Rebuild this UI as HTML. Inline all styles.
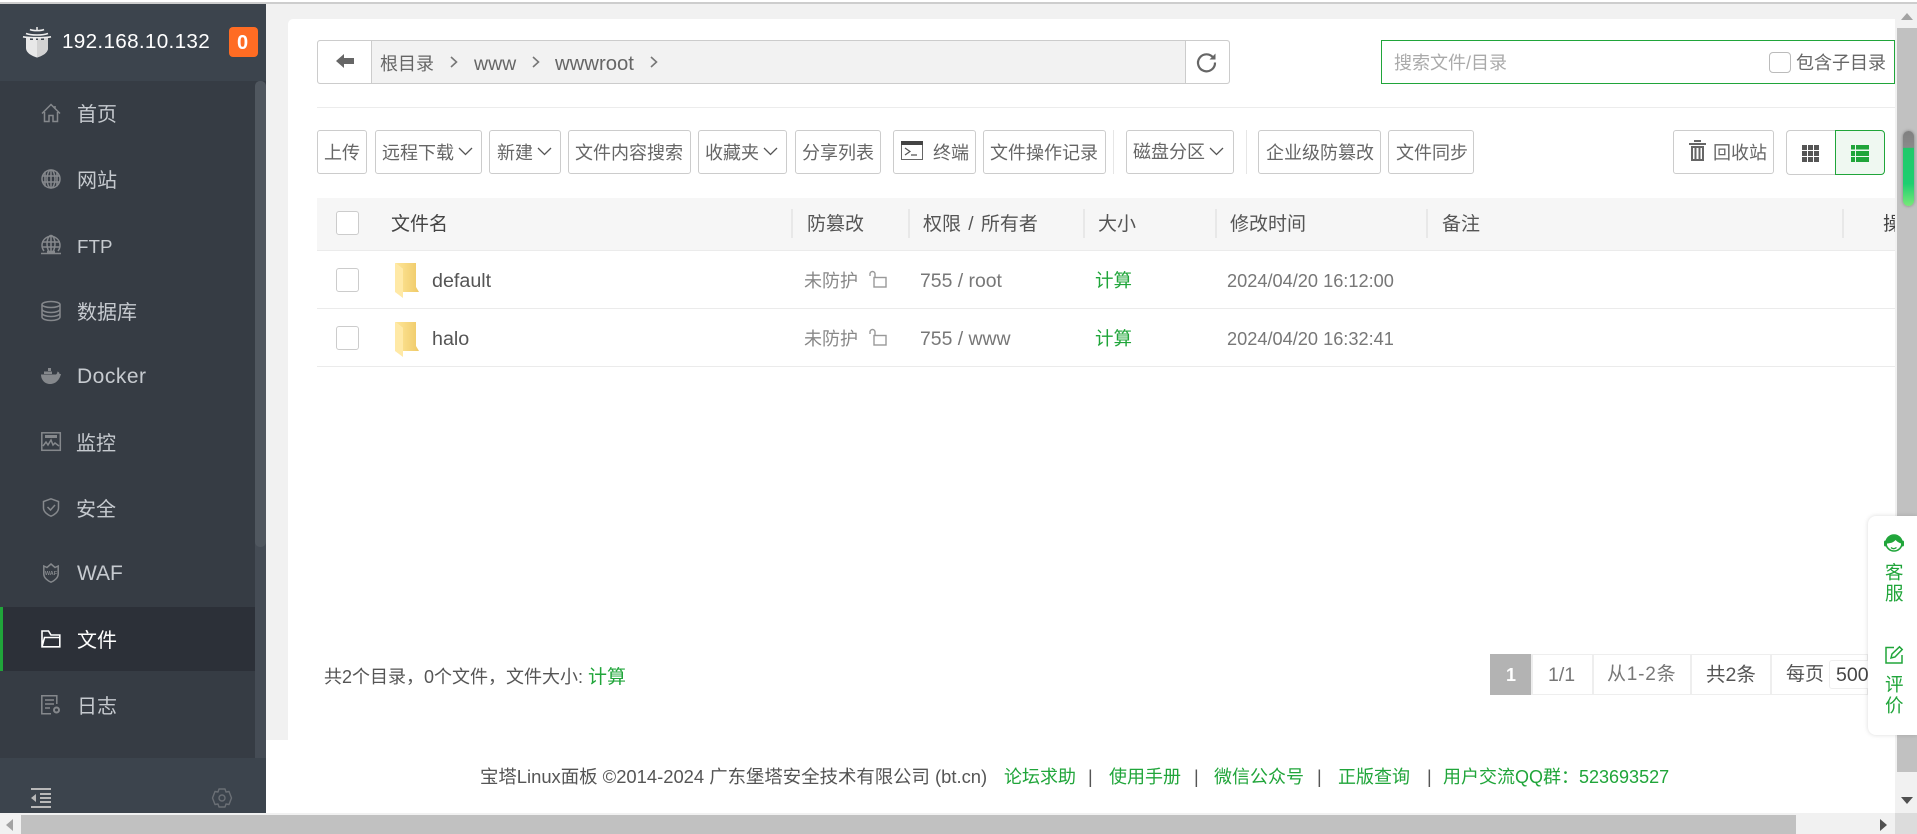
<!DOCTYPE html>
<html lang="zh-CN"><head><meta charset="utf-8"><title>文件管理</title>
<style>
html,body{margin:0;padding:0;width:1917px;height:834px;overflow:hidden;background:#fff}
body{position:relative;font-family:"Liberation Sans","Noto Sans CJK SC",sans-serif;color:#666}
.a{position:absolute;box-sizing:border-box}
.t{position:absolute;white-space:nowrap;line-height:0;font-size:18px}
.m{font-size:20px;color:#c6cacf;left:77px}
.b{position:absolute;box-sizing:border-box;top:130px;height:44px;border:1px solid #ccc;border-radius:3px;background:#fff}
.h{color:#555;font-size:19px}
.g{color:#20a53a}
.s{position:absolute;width:2px;background:#e8e8e8;top:209px;height:29px}
.l{position:absolute;left:317px;width:1578px;height:1px;background:#ebebeb}
.c{position:absolute;box-sizing:border-box;left:336px;width:23px;height:24px;border:1px solid #ccc;border-radius:3px;background:#fff}
svg{position:absolute;overflow:visible}
.i{fill:none;stroke:#85888c;stroke-width:1.5}
.v{color:#666}
</style></head><body>
<!-- top line -->
<div class="a" style="left:0;top:2px;width:1917px;height:2px;background:#cdcdcd"></div>
<!-- content bg -->
<div class="a" style="left:266px;top:4px;width:1629px;height:736px;background:#f1f1f1"></div>
<div class="a" style="left:288px;top:19px;width:1607px;height:721px;background:#fff;border-top-left-radius:5px"></div>

<!-- sidebar -->
<div class="a" style="left:0;top:4px;width:266px;height:809px;background:#363c44"></div>
<div class="a" style="left:0;top:4px;width:266px;height:77px;background:#3c444d"></div>
<div class="a" style="left:255px;top:81px;width:11px;height:677px;background:#454c55;border-radius:5px 5px 0 0"></div>
<div class="a" style="left:255px;top:81px;width:11px;height:466px;background:#50575f;border-radius:5px"></div>
<div class="a" style="left:0;top:607px;width:255px;height:64px;background:#2c3038"></div>
<div class="a" style="left:0;top:607px;width:3px;height:64px;background:#20a53a"></div>
<div class="a" style="left:0;top:758px;width:266px;height:55px;background:#3c444d"></div>

<svg style="left:23px;top:27px" width="28" height="31" viewBox="0 0 28 31"><path d="M3 11H7V13H10V11H13V13H15V11H18V13H21V11H25V21C25 26 19 29 14 30.500C9 29 3 26 3 21Z" fill="#e8e8e8"/><path d="M14 13H15V11H18V13H21V11H25V21C25 26 19 29 14 30.500Z" fill="#d2d2d2"/><path d="M7 2.500C10 4 18 4 21 2.500M3 6.500C8 8.500 20 8.500 25 6.500M0 9.800C6 11 22 11 28 9.800" stroke="#eee" stroke-width="1.600" fill="none"/><path d="M14 0V3" stroke="#eee" stroke-width="1.500"/></svg>
<div class="t" style="left:62px;top:42px;font-size:20.700px;color:#fff;letter-spacing:.3px">192.168.10.132</div>
<div class="a" style="left:229px;top:27px;width:29px;height:30px;background:#ff6c23;border-radius:4px"></div>
<div class="t" style="left:237px;top:43px;font-size:20px;color:#fff;font-weight:bold">0</div>

<svg class="i" style="left:41px;top:103px" width="20" height="20" viewBox="0 0 20 20"><path d="M1 10.500L10 1.500L19 10.500M3.500 9V18.500H8V12.500H12V18.500H16.500V9M14 3V6"/></svg>
<div class="t m" style="top:115px">首页</div>
<svg class="i" style="left:41px;top:169px" width="20" height="20" viewBox="0 0 20 20"><circle cx="10" cy="10" r="9"/><ellipse cx="10" cy="10" rx="4" ry="9"/><path d="M1 7H19M1 13H19M10 1V19M4 2.500V17.500M16 2.500V17.500"/></svg>
<div class="t m" style="top:181px">网站</div>
<svg class="i" style="left:41px;top:235px" width="20" height="20" viewBox="0 0 20 20"><path d="M3 16A9 9 0 1 1 17 16"/><ellipse cx="10" cy="9" rx="4" ry="8.500"/><path d="M1 7H19M1 12H19M10 1V17M0 18.500H20"/><path d="M6 17H14" stroke-width="2.500"/></svg>
<div class="t m" style="top:247px;font-size:18.800px;left:77px">FTP</div>
<svg class="i" style="left:41px;top:301px" width="20" height="20" viewBox="0 0 20 20"><ellipse cx="10" cy="3.500" rx="9" ry="3"/><path d="M1 3.500V16C1 18 5 19.500 10 19.500S19 18 19 16V3.500M1 8C1 10 5 11.500 10 11.500S19 10 19 8M1 12C1 14 5 15.500 10 15.500S19 14 19 12"/></svg>
<div class="t m" style="top:313px">数据库</div>
<svg style="left:41px;top:367px" width="20" height="18" viewBox="0 0 20 18"><path d="M0 7.500H15C16 7 16.500 5 16.500 4.500C18 5 18.500 6 18.500 7C19 7 19.500 7 20 7C19 11 16 17 9 17C3 17 0 12 0 7.500Z" fill="#85888c"/><path d="M3 4.500H11V7H3ZM7 1H10V4H7Z" fill="#85888c"/></svg>
<div class="t m" style="top:377px;font-size:21px;letter-spacing:.5px">Docker</div>
<svg class="i" style="left:41px;top:432px" width="20" height="19" viewBox="0 0 20 19"><rect x=".8" y=".8" width="18.500" height="17.500"/><rect x="4" y="3" width="12" height="3" fill="#85888c" stroke="none"/><path d="M2 14L5 10L7 13L10 8L12 13L14 11L18 14"/></svg>
<div class="t m" style="top:444px;left:76px">监控</div>
<svg class="i" style="left:43px;top:498px" width="16" height="19" viewBox="0 0 16 19"><path d="M8 .8L15.500 3.500V10C15.500 14 11 17 8 18.200C5 17 .5 14 .5 10V3.500Z"/><path d="M4.500 9L7.500 12L12 7"/></svg>
<div class="t m" style="top:510px;left:76px">安全</div>
<svg class="i" style="left:43px;top:563px" width="16" height="20" viewBox="0 0 16 20"><path d="M.8 3L4 4.500L8 1L12 4.500L15.200 3V11C15.200 15 11 18 8 19.200C5 18 .8 15 .8 11Z"/><text x="8" y="12" text-anchor="middle" font-size="5.500" font-weight="bold" fill="#85888c" stroke="none" font-family="Liberation Sans">WAF</text></svg>
<div class="t m" style="top:574px;font-size:21px">WAF</div>
<svg style="left:41px;top:630px" width="20" height="18" viewBox="0 0 20 18" fill="none" stroke="#fff" stroke-width="1.600"><path d="M1 16.800V1H7.500L10 5H18.800V16.800ZM1 16.800L3.500 7.500H19"/></svg>
<div class="t m" style="top:641px;color:#fff">文件</div>
<svg class="i" style="left:41px;top:695px" width="20" height="20" viewBox="0 0 20 20"><path d="M15.800 9V.8H.8V18.800H10M4 5H13M4 9H13M4 13H9"/><circle cx="15.500" cy="15" r="2.500" stroke-width="2"/></svg>
<div class="t m" style="top:707px">日志</div>

<svg style="left:31px;top:788px" width="20" height="20" viewBox="0 0 20 20" fill="#b8b8b8"><rect width="20" height="2"/><rect y="18" width="20" height="2"/><rect x="9" y="5" width="11" height="2"/><rect x="9" y="9" width="11" height="2"/><rect x="9" y="13" width="11" height="2"/><path d="M5 6V14L0 10Z"/></svg>
<svg style="left:212px;top:788px" width="20" height="20" viewBox="0 0 20 20" fill="none" stroke="#6a6f75" stroke-width="1.400"><path d="M7 1H13L14 4L17 3.500L19.500 10L17 16.500L14 16L13 19H7L6 16L3 16.500L.5 10L3 3.500L6 4Z" stroke-linejoin="round"/><circle cx="10" cy="10" r="3"/></svg>

<!-- breadcrumb -->
<div class="a" style="left:317px;top:40px;width:913px;height:44px;background:#f2f2f2;border:1px solid #ccc;border-radius:3px"></div>
<div class="a" style="left:318px;top:41px;width:54px;height:42px;background:#fff;border-right:1px solid #ccc;border-radius:3px 0 0 3px"></div>
<div class="a" style="left:1185px;top:41px;width:44px;height:42px;background:#fff;border-left:1px solid #ccc;border-radius:0 3px 3px 0"></div>
<svg style="left:336px;top:54px" width="19" height="14" viewBox="0 0 19 14"><path d="M0 7L8 0V4H18V10H8V14Z" fill="#666"/></svg>
<div class="t" style="left:380px;top:64px;color:#666">根目录</div>
<svg class="ch" style="left:450px;top:56px" width="8" height="12" viewBox="0 0 8 12"><path d="M1 1L6.500 6L1 11" fill="none" stroke="#777" stroke-width="1.600"/></svg>
<div class="t" style="left:474px;top:64px;color:#666;font-size:19.500px">www</div>
<svg style="left:532px;top:56px" width="8" height="12" viewBox="0 0 8 12"><path d="M1 1L6.500 6L1 11" fill="none" stroke="#777" stroke-width="1.600"/></svg>
<div class="t" style="left:555px;top:64px;color:#666;font-size:20.300px">wwwroot</div>
<svg style="left:650px;top:56px" width="8" height="12" viewBox="0 0 8 12"><path d="M1 1L6.500 6L1 11" fill="none" stroke="#777" stroke-width="1.600"/></svg>
<svg style="left:1196px;top:52px" width="21" height="21" viewBox="0 0 21 21" fill="none" stroke="#666" stroke-width="2.200"><path d="M17.500 6A8.500 8.500 0 1 0 19 10.500"/><path d="M19.500 1.500V7.500H13.500" fill="#666" stroke="none"/></svg>

<!-- search -->
<div class="a" style="left:1381px;top:40px;width:514px;height:44px;border:1px solid #20a53a;border-right:1px solid #20a53a;background:#fff"></div>
<div class="t" style="left:1394px;top:63px;color:#aaa">搜索文件/目录</div>
<div class="a" style="left:1769px;top:52px;width:22px;height:21px;border:1px solid #bbb;border-radius:4px;background:#fff"></div>
<div class="t" style="left:1796px;top:63px;color:#666">包含子目录</div>

<div class="a" style="left:317px;top:107px;width:1578px;height:1px;background:#ececec"></div>

<!-- toolbar -->
<div class="b" style="left:317px;width:50px"></div><div class="t v" style="left:324px;top:153px">上传</div>
<div class="b" style="left:375px;width:107px"></div><div class="t v" style="left:382px;top:153px">远程下载</div>
<svg style="left:458px;top:147px" width="15" height="9" viewBox="0 0 15 9"><path d="M1 1L7.500 7.500L14 1" fill="none" stroke="#555" stroke-width="1.300"/></svg>
<div class="b" style="left:489px;width:72px"></div><div class="t v" style="left:497px;top:153px">新建</div>
<svg style="left:537px;top:147px" width="15" height="9" viewBox="0 0 15 9"><path d="M1 1L7.500 7.500L14 1" fill="none" stroke="#555" stroke-width="1.300"/></svg>
<div class="b" style="left:568px;width:123px"></div><div class="t v" style="left:575px;top:153px">文件内容搜索</div>
<div class="b" style="left:698px;width:89px"></div><div class="t v" style="left:705px;top:153px">收藏夹</div>
<svg style="left:763px;top:147px" width="15" height="9" viewBox="0 0 15 9"><path d="M1 1L7.500 7.500L14 1" fill="none" stroke="#555" stroke-width="1.300"/></svg>
<div class="b" style="left:795px;width:86px"></div><div class="t v" style="left:802px;top:153px">分享列表</div>
<div class="b" style="left:893px;width:83px"></div>
<svg style="left:901px;top:141px" width="22" height="19" viewBox="0 0 22 19"><rect x=".5" y=".5" width="21" height="18" fill="#fff" stroke="#666"/><rect width="22" height="4" fill="#444"/><path d="M4 7L9 10.500L4 14M10 14H16" fill="none" stroke="#555" stroke-width="1.200"/></svg>
<div class="t v" style="left:933px;top:153px">终端</div>
<div class="b" style="left:983px;width:123px"></div><div class="t v" style="left:990px;top:153px">文件操作记录</div>
<div class="a" style="left:1113px;top:130px;width:1px;height:44px;background:#e6e6e6"></div>
<div class="b" style="left:1126px;width:108px"></div><div class="t v" style="left:1133px;top:152px">磁盘分区</div>
<svg style="left:1209px;top:147px" width="15" height="9" viewBox="0 0 15 9"><path d="M1 1L7.500 7.500L14 1" fill="none" stroke="#555" stroke-width="1.300"/></svg>
<div class="a" style="left:1246px;top:130px;width:1px;height:44px;background:#e6e6e6"></div>
<div class="b" style="left:1258px;width:123px"></div><div class="t v" style="left:1266px;top:153px">企业级防篡改</div>
<div class="b" style="left:1388px;width:86px"></div><div class="t v" style="left:1396px;top:153px">文件同步</div>
<div class="b" style="left:1673px;width:101px"></div>
<svg style="left:1689px;top:140px" width="17" height="21" viewBox="0 0 17 21" fill="#666"><rect y="3" width="17" height="2"/><rect x="5" width="7" height="2"/><path d="M2 6H15V21H2ZM4 8V19H5.500V8ZM7.500 8V19H9.500V8ZM11.500 8V19H13V8Z" fill-rule="evenodd"/></svg>
<div class="t v" style="left:1713px;top:153px">回收站</div>
<div class="a" style="left:1786px;top:130px;width:50px;height:45px;border:1px solid #ccc;border-right:0;border-radius:4px 0 0 4px;background:#fff"></div>
<div class="a" style="left:1835px;top:130px;width:50px;height:45px;border:1px solid #20a53a;border-radius:0 4px 4px 0;background:#eff8f1"></div>
<svg style="left:1802px;top:145px" width="17" height="17" viewBox="0 0 17 17" fill="#555"><rect width="5" height="5"/><rect x="6" width="5" height="5"/><rect x="12" width="5" height="5"/><rect y="6" width="5" height="5"/><rect x="6" y="6" width="5" height="5"/><rect x="12" y="6" width="5" height="5"/><rect y="12" width="5" height="5"/><rect x="6" y="12" width="5" height="5"/><rect x="12" y="12" width="5" height="5"/></svg>
<svg style="left:1851px;top:145px" width="18" height="17" viewBox="0 0 18 17" fill="#20a53a"><rect width="4" height="4.500"/><rect x="5" width="13" height="4.500"/><rect y="6" width="4" height="5"/><rect x="5" y="6" width="13" height="5"/><rect y="12" width="4" height="5"/><rect x="5" y="12" width="13" height="5"/></svg>

<!-- table -->
<div class="a" style="left:317px;top:198px;width:1578px;height:52px;background:#f6f6f6;overflow:hidden"><div class="t" style="left:1566px;top:27px;color:#444;font-size:19px">操作</div></div>
<div class="l" style="top:250px"></div><div class="l" style="top:308px"></div><div class="l" style="top:366px"></div>
<div class="c" style="top:211px"></div><div class="c" style="top:268px"></div><div class="c" style="top:326px"></div>
<div class="t" style="left:391px;top:225px;color:#444;font-size:19px">文件名</div>
<div class="s" style="left:791px"></div><div class="t h" style="left:807px;top:225px">防篡改</div>
<div class="s" style="left:908px"></div><div class="t h" style="left:923px;top:225px;word-spacing:2px">权限 / 所有者</div>
<div class="s" style="left:1083px"></div><div class="t h" style="left:1098px;top:225px">大小</div>
<div class="s" style="left:1215px"></div><div class="t h" style="left:1230px;top:225px">修改时间</div>
<div class="s" style="left:1426px"></div><div class="t h" style="left:1442px;top:225px">备注</div>
<div class="s" style="left:1842px"></div>

<svg style="left:395px;top:263px" width="24" height="35" viewBox="0 0 24 35"><defs><linearGradient id="f1" x1="0" x2="1" y1="0" y2="0"><stop offset="0" stop-color="#ffe79a"/><stop offset="1" stop-color="#efca68"/></linearGradient></defs><path d="M0 0H21V24L24 29H8V6Z" fill="url(#f1)"/><path d="M0 0L8 6V35L0 29Z" fill="#ffe9a6"/></svg>
<div class="t" style="left:432px;top:281px;color:#555;font-size:19.700px">default</div>
<div class="t" style="left:804px;top:281px;color:#888">未防护</div>
<svg style="left:869px;top:271px" width="18" height="17" viewBox="0 0 18 17" fill="none" stroke="#999" stroke-width="1.400"><rect x="5" y="6.500" width="12" height="9.500"/><path d="M6 6.500V3A2.500 2.500 0 0 0 1 3V5"/></svg>
<div class="t" style="left:920px;top:281px;color:#777;font-size:19.400px">755 / root</div>
<div class="t g" style="left:1095px;top:281px;font-size:18.500px">计算</div>
<div class="t" style="left:1227px;top:281px;color:#777;font-size:18.200px">2024/04/20 16:12:00</div>

<svg style="left:395px;top:322px" width="24" height="35" viewBox="0 0 24 35"><path d="M0 0H21V24L24 29H8V6Z" fill="url(#f1)"/><path d="M0 0L8 6V35L0 29Z" fill="#ffe9a6"/></svg>
<div class="t" style="left:432px;top:339px;color:#555;font-size:19.700px">halo</div>
<div class="t" style="left:804px;top:339px;color:#888">未防护</div>
<svg style="left:869px;top:329px" width="18" height="17" viewBox="0 0 18 17" fill="none" stroke="#999" stroke-width="1.400"><rect x="5" y="6.500" width="12" height="9.500"/><path d="M6 6.500V3A2.500 2.500 0 0 0 1 3V5"/></svg>
<div class="t" style="left:920px;top:339px;color:#777;font-size:19.400px">755 / www</div>
<div class="t g" style="left:1095px;top:339px;font-size:18.500px">计算</div>
<div class="t" style="left:1227px;top:339px;color:#777;font-size:18.200px">2024/04/20 16:32:41</div>

<!-- stats and pagination -->
<div class="t" style="left:324px;top:677px;color:#555;font-size:18px">共2个目录，0个文件，文件大小: <span class="g" style="font-size:19px">计算</span></div>
<div class="a" style="left:1490px;top:654px;width:41px;height:41px;background:#b3b3b3"></div>
<div class="t" style="left:1506px;top:675px;color:#fff;font-weight:bold">1</div>
<div class="a" style="left:1531px;top:654px;width:337px;height:41px;border:1px solid #eee;border-left:2px solid #eee"></div>
<div class="a" style="left:1592px;top:654px;width:2px;height:41px;background:#eee"></div>
<div class="a" style="left:1690px;top:654px;width:2px;height:41px;background:#eee"></div>
<div class="a" style="left:1770px;top:654px;width:2px;height:41px;background:#eee"></div>
<div class="t" style="left:1548px;top:675px;color:#777;font-size:19.500px">1/1</div>
<div class="t" style="left:1607px;top:675px;color:#777;font-size:19px;letter-spacing:.8px">从1-2条</div>
<div class="t" style="left:1706px;top:675px;color:#555;font-size:19.500px">共2条</div>
<div class="t" style="left:1786px;top:675px;color:#555;font-size:19px">每页</div>
<div class="a" style="left:1829px;top:660px;width:60px;height:29px;border:1px solid #eee;border-radius:3px;background:#fff"></div>
<div class="t" style="left:1836px;top:675px;color:#444;font-size:19.500px">500</div>

<!-- footer -->
<div class="t" style="left:480px;top:777px;color:#555;font-size:18.400px">宝塔Linux面板 ©2014-2024 广东堡塔安全技术有限公司 (bt.cn)</div>
<div class="t g" style="left:1004px;top:777px">论坛求助</div><div class="t" style="left:1088px;top:777px;color:#555">|</div>
<div class="t g" style="left:1109px;top:777px">使用手册</div><div class="t" style="left:1194px;top:777px;color:#555">|</div>
<div class="t g" style="left:1214px;top:777px">微信公众号</div><div class="t" style="left:1317px;top:777px;color:#555">|</div>
<div class="t g" style="left:1338px;top:777px">正版查询</div><div class="t" style="left:1427px;top:777px;color:#555">|</div>
<div class="t g" style="left:1443px;top:777px">用户交流QQ群：523693527</div>

<!-- vertical scrollbar -->
<div class="a" style="left:1895px;top:4px;width:22px;height:809px;background:#f1f1f1"></div>
<div class="a" style="left:1897px;top:28px;width:20px;height:744px;background:#c1c1c1"></div>
<svg style="left:1901px;top:13px" width="12" height="7" viewBox="0 0 12 7"><path d="M0 7L6 0L12 7Z" fill="#a3a3a3"/></svg>
<svg style="left:1901px;top:797px" width="12" height="7" viewBox="0 0 12 7"><path d="M0 0L6 7L12 0Z" fill="#505050"/></svg>
<!-- green indicator -->
<div class="a" style="left:1903px;top:131px;width:11px;height:75px;border-radius:6px;background:linear-gradient(#808080 0,#8a8a8a 22%,#1fc96a 23%,#1ecf70 70%,#78e878 100%);box-shadow:0 0 3px rgba(0,0,0,.35)"></div>

<!-- horizontal scrollbar -->
<div class="a" style="left:0;top:813px;width:1895px;height:21px;background:#f1f1f1"></div>
<div class="a" style="left:21px;top:815px;width:1775px;height:19px;background:#c1c1c1"></div>
<div class="a" style="left:1895px;top:813px;width:22px;height:21px;background:#dcdcdc"></div>
<svg style="left:6px;top:819px" width="7" height="12" viewBox="0 0 7 12"><path d="M7 0L0 6L7 12Z" fill="#a3a3a3"/></svg>
<svg style="left:1880px;top:819px" width="7" height="12" viewBox="0 0 7 12"><path d="M0 0L7 6L0 12Z" fill="#505050"/></svg>

<!-- floating widget -->
<div class="a" style="left:1868px;top:516px;width:49px;height:219px;background:#fff;border-radius:8px 0 0 8px;box-shadow:0 0 5px rgba(0,0,0,.15)"></div>
<svg style="left:1884px;top:534px" width="20" height="19" viewBox="0 0 20 19"><circle cx="10" cy="9" r="8" fill="none" stroke="#20a53a" stroke-width="1.600"/><path d="M2.500 9.500C2.500 4 6.500 1.500 10 1.500C13.500 1.500 17.500 4 17.500 9.500C14.500 9 12.500 7 11.500 6C9.500 8.500 6 9.500 2.500 9.500Z" fill="#20a53a"/><rect y="6.500" width="3" height="6" rx="1.500" fill="#20a53a"/><rect x="17" y="6.500" width="3" height="6" rx="1.500" fill="#20a53a"/><path d="M7 13.500C8.500 15 10.500 15 12.500 13.500" fill="none" stroke="#20a53a" stroke-width="1.300"/></svg>
<div class="t g" style="left:1885px;top:573px;font-size:18.500px">客</div>
<div class="t g" style="left:1885px;top:594px;font-size:18.500px">服</div>
<svg style="left:1885px;top:646px" width="18" height="18" viewBox="0 0 18 18" fill="none" stroke="#20a53a" stroke-width="1.500"><path d="M9 1.500H1V17H17V9"/><path d="M6 12L7 8L14.500 .8L17.200 3.500L10 11Z"/></svg>
<div class="t g" style="left:1885px;top:685px;font-size:18.500px">评</div>
<div class="t g" style="left:1885px;top:706px;font-size:18.500px">价</div>
</body></html>
